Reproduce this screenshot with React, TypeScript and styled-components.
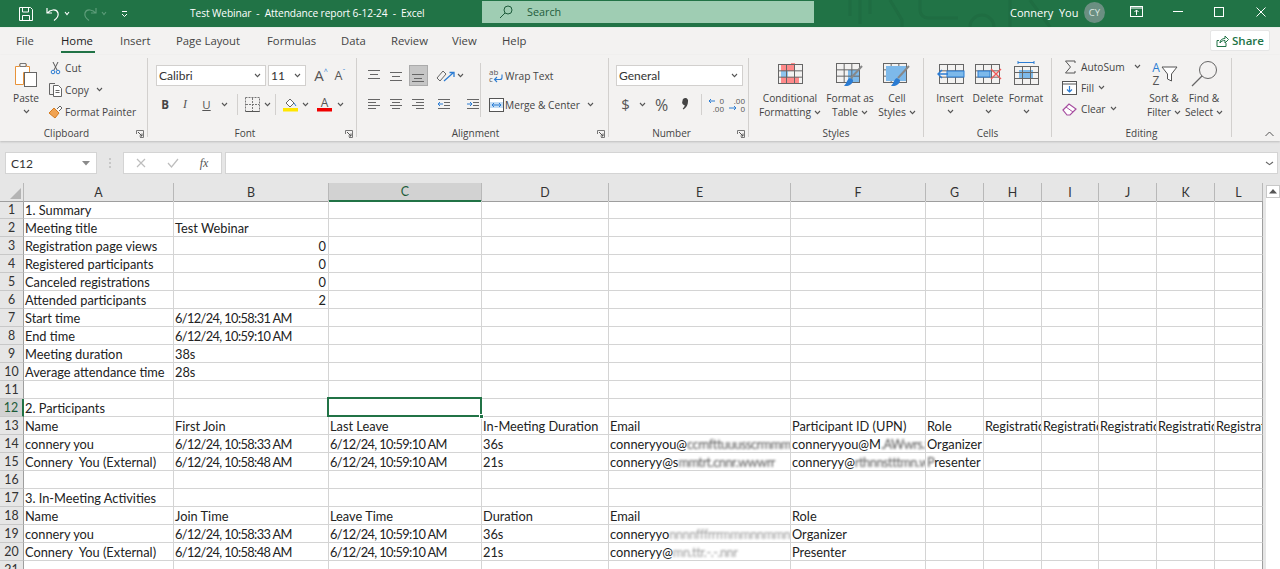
import React from "react";
import styled, { createGlobalStyle } from "styled-components";

const Global = createGlobalStyle`
  html, body { margin: 0; padding: 0; background: #fff; }
  #root { width: 1280px; height: 569px; overflow: hidden; }
`;
const UI = `"Open Sans", "Noto Sans", "Liberation Sans", sans-serif`;
const Cal = `Lato, "Open Sans", sans-serif`;

const Page = styled.div`
  width: 1280px; height: 569px; overflow: hidden;
  display: flex; flex-direction: column;
  font-family: ${UI}; background: #e6e6e6;
`;
const TitleBar = styled.header`
  position: relative; height: 27px; flex: none; background: #217346; color: #fff;
  display: flex; align-items: center; border-bottom: 1px solid #e8efe9; font-size: 10.5px;
`;
const Pattern = styled.svg`
  position: absolute; left: 840px; top: 0; width: 240px; height: 27px;
`;
const Slot = styled.span<{ $w: number; $start?: boolean }>`
  flex: none; width: ${p => p.$w}px; display: inline-flex; align-items: center;
  justify-content: ${p => (p.$start ? "flex-start" : "center")}; position: relative;
`;
const TitleText = styled.div`
  flex: none; width: 354px; padding-left: 62px; box-sizing: border-box; white-space: pre; position: relative; top: -1px; letter-spacing: -0.1px; font-size: 10.2px;
`;
const SearchBox = styled.div`
  flex: none; width: 332px; height: 22px; margin-top: -3px; background: #9fcdb3; color: #1f5c3c;
  display: flex; align-items: center; padding: 0 0 1px 17px; gap: 14px; box-sizing: border-box; font-size: 10.8px;
`;
const UserName = styled.div`
  flex: none; margin-left: 196px; width: 74px; white-space: pre; font-size: 11px; position: relative; top: -1px;
`;
const Avatar = styled.div`
  flex: none; width: 21px; height: 21px; border-radius: 50%; background: #6b8f82; color: #d9e6e0;
  font-size: 9.5px; display: flex; align-items: center; justify-content: center; margin-top: -3px;
`;
const WinBtns = styled.div`
  display: flex; align-items: center; margin-left: 10px; margin-top: -4px;
`;
const TabRow = styled.nav`
  flex: none; height: 27px; background: #f3f2f1; display: flex; align-items: flex-start; padding-left: 16px;
  font-size: 11.3px; color: #444; position: relative;
`;
const Tab = styled.div<{ $w: number; $active?: boolean }>`
  flex: none; width: ${p => p.$w}px; padding-top: 5px; line-height: 16px; position: relative;
  color: ${p => (p.$active ? "#222" : "#444")};
  ${p => p.$active ? `&::after{content:"";position:absolute;left:0;top:23px;width:34px;height:2px;background:#217346;}` : ""}
`;
const ShareBtn = styled.button`
  position: absolute; left: 1210px; top: 2px; width: 60px; height: 21px; padding: 0; box-sizing: border-box;
  background: #fff; border: 1px solid #e6e6e6; border-radius: 2px; color: #217346; font: 600 11.5px ${UI};
  display: flex; align-items: center; justify-content: center; gap: 3px;
`;
const Ribbon = styled.section`
  flex: none; height: 86px; background: #f3f2f1; display: flex; position: relative;
  box-shadow: 0 1px 2px rgba(0,0,0,.18); z-index: 1; font-size: 10px; color: #444;
`;
const Group = styled.div<{ $w: number }>`
  flex: none; width: ${p => p.$w}px; height: 86px; display: flex; flex-direction: column; position: relative;
`;
const GroupBody = styled.div<{ $pl?: number }>`
  flex: 1; min-height: 0; display: flex; padding-left: ${p => p.$pl ?? 0}px;
`;
const GroupLabel = styled.div<{ $launcher?: boolean }>`
  flex: none; height: 16px; line-height: 17px; text-align: center; color: #444; font-size: 10px;
  padding-right: ${p => (p.$launcher ? 14 : 0)}px;
`;
const Launcher = styled.svg`
  position: absolute; right: 3px; bottom: 3px; width: 8px; height: 8px;
`;
const Sep = styled.div`
  flex: none; width: 1px; height: 79px; margin-top: 3px; background: #d2d0ce;
`;
const InnerSep = styled.div`
  flex: none; width: 1px; height: 54px; margin-top: 8px; background: #d2d0ce;
`;
const Rows = styled.div<{ $w?: number }>`
  display: flex; flex-direction: column; padding-top: 10px; gap: 8px;
  ${p => (p.$w ? `width:${p.$w}px;flex:none;` : "")}
`;
const Row = styled.div`
  display: flex; align-items: center; height: 21px; position: relative;
`;
const VLine = styled.span`
  flex: none; width: 1px; height: 21px; background: #d2d0ce;
`;
const Combo = styled.div<{ $w: number; $ml?: number }>`
  flex: none; width: ${p => p.$w}px; height: 21px; margin-left: ${p => p.$ml ?? 0}px; box-sizing: border-box;
  background: #fff; border: 1px solid #d2d0ce; display: flex; align-items: center; justify-content: space-between;
  padding: 0 4px 0 2px; font-size: 10.2px; color: #333;
`;
const CalText = styled.span`
  font-family: ${Cal}; font-size: 12px;
`;
const ActiveBtn = styled.span`
  flex: none; width: 19px; height: 21px; box-sizing: border-box; background: #c6c6c6; border: 1px solid #ababab;
  display: inline-flex; align-items: center; justify-content: center;
`;
const BigBtn = styled.div<{ $w: number; $pl?: number }>`
  flex: none; width: ${p => p.$w}px; margin-left: ${p => p.$pl ?? 0}px; display: flex; flex-direction: column; align-items: center; padding-top: 4px;
  font-size: 10.2px; line-height: 14px; color: #444; white-space: nowrap;
`;
const BigIcon = styled.div`
  height: 29px; display: flex; align-items: center; justify-content: center; margin-bottom: 3px;
`;
const BigLine = styled.span`
  display: inline-flex; align-items: center; gap: 3px;
`;
const ChevLine = styled.div`
  margin-top: 4px;
`;
const SmallCol = styled.div<{ $pt: number; $w?: number; $gap?: number }>`
  display: flex; flex-direction: column; padding-top: ${p => p.$pt}px; gap: ${p => p.$gap ?? 0}px;
  ${p => (p.$w ? `width:${p.$w}px;flex:none;` : "")}
`;
const SmallRow = styled.div<{ $gap?: number }>`
  display: flex; align-items: center; height: 21px; gap: ${p => p.$gap ?? 4}px; white-space: nowrap; font-size: 10.2px;
`;
const Big = styled.span`
  font-size: 15px; color: #555; line-height: 15px;
`;
const Mid = styled.span`
  font-size: 12.5px; color: #555; line-height: 15px;
`;
const Caret = styled.span`
  font-size: 7px; color: #2b7cd3; margin-top: -7px; line-height: 8px;
`;
const Bold = styled.b`
  font-size: 11.5px; color: #444;
`;
const Ital = styled.i`
  font-size: 12px; color: #555; font-family: "Liberation Serif", serif;
`;
const Under = styled.u`
  font-size: 11.5px; color: #555;
`;
const Pct = styled.span`
  font-size: 16px; color: #555;
`;
const IconBox = styled.span<{ $w: number }>`
  flex: none; width: ${p => p.$w}px; display: inline-flex; justify-content: center; align-items: center;
`;
const Collapse = styled.svg`
  position: absolute; left: 1265px; top: 76px; width: 9px; height: 6px;
`;
const FormulaBar = styled.div`
  flex: none; height: 42px; background: #e6e6e6; display: flex; align-items: flex-start; padding-top: 11px; box-sizing: border-box;
`;
const NameBox = styled.div`
  flex: none; width: 92px; height: 22px; margin-left: 5px; box-sizing: border-box; background: #fff; border: 1px solid #d4d4d4;
  display: flex; align-items: center; justify-content: space-between; padding: 0 6px 0 5px; font-size: 10.2px; color: #333;
`;
const Dots = styled.div`
  flex: none; width: 26px; height: 22px; display: flex; align-items: center; justify-content: center;
`;
const FxBox = styled.div`
  flex: none; width: 99px; height: 22px; box-sizing: border-box; background: #fff; border: 1px solid #d4d4d4; display: flex; align-items: center;
`;
const FxMark = styled.i`
  font-family: "Liberation Serif", serif; font-size: 12px; color: #555;
`;
const Input = styled.div`
  flex: none; width: 1053px; height: 22px; margin-left: 3px; box-sizing: border-box; background: #fff; border: 1px solid #d4d4d4;
  display: flex; align-items: center; justify-content: flex-end; padding-right: 3px;
`;
const Work = styled.div`
  flex: 1; min-height: 0; display: flex; align-items: flex-start; overflow: hidden;
`;
const Sheet = styled.div`
  flex: none; display: grid; background: #fff;
  grid-template-columns: 24px 150px 155px 153px 127px 182px 135px 58px 58px 57px 58px 58px 48px;
  grid-auto-rows: 18px; font-family: ${Cal}; font-size: 12.8px; color: #222;
`;
const Corner = styled.div`
  height: 19px; background: #e6e6e6; border-right: 1px solid #b8b8b8; border-bottom: 1px solid #9e9e9e; box-sizing: border-box; position: relative;
  &::after { content: ""; position: absolute; right: 2px; bottom: 2px; border-style: solid; border-width: 0 0 11px 11px; border-color: transparent transparent #b4b4b4 transparent; }
`;
const ColHead = styled.div<{ $on?: boolean }>`
  height: 19px; box-sizing: border-box; background: ${p => (p.$on ? "#d2d2d2" : "#e6e6e6")};
  border-right: 1px solid #b8b8b8; border-bottom: ${p => (p.$on ? "2px solid #217346" : "1px solid #9e9e9e")};
  display: flex; align-items: center; justify-content: center; font-size: 12.4px; color: ${p => (p.$on ? "#1c5c38" : "#333")};
`;
const RowHead = styled.div<{ $on?: boolean }>`
  box-sizing: border-box; background: ${p => (p.$on ? "#d2d2d2" : "#e6e6e6")};
  border-right: ${p => (p.$on ? "2px solid #217346" : "1px solid #9e9e9e")}; border-bottom: 1px solid #c8c8c8;
  display: flex; align-items: center; justify-content: center; font-size: 12.4px; color: ${p => (p.$on ? "#1c5c38" : "#333")};
`;
const Cell = styled.div<{ $right?: boolean; $last?: boolean; $sel?: boolean; $date?: boolean }>`
  box-sizing: border-box; border-right: 1px solid ${p => (p.$last ? "#9e9e9e" : "#d4d4d4")}; border-bottom: 1px solid #d4d4d4;
  padding: 0 2px 0 1px; line-height: 19px; white-space: pre; position: relative;
  overflow: ${p => (p.$sel ? "visible" : "hidden")}; text-align: ${p => (p.$right ? "right" : "left")};
  letter-spacing: ${p => (p.$date ? "-0.62px" : "0")};
  ${p => p.$sel ? `
    &::before{content:"";position:absolute;left:-2px;top:-2px;right:-1px;bottom:-1px;border:2px solid #217346;z-index:2;}
    &::after{content:"";position:absolute;right:-3px;bottom:-3px;width:5px;height:5px;background:#217346;border:1px solid #fff;box-sizing:border-box;z-index:3;}
  ` : ""}
`;
const Smudge = styled.span<{ $soft?: boolean }>`
  display: inline-block; filter: blur(1px); color: #555; letter-spacing: -0.5px; vertical-align: top;
  opacity: ${p => (p.$soft ? 0.6 : 1)};
`;
const Scroll = styled.div`
  flex: none; width: 14px; height: 384px; margin-left: 3px; margin-top: 2px; background: #fff; display: flex; flex-direction: column;
`;
const ScrollBtn = styled.div`
  height: 13px; border: 1px solid #c8c8c8; box-sizing: border-box; display: flex; align-items: center; justify-content: center; background: #fff;
`;

/* ---------- icons ---------- */
const S = (w: number, h: number, children: React.ReactNode) => (
  <svg width={w} height={h} viewBox={`0 0 ${w} ${h}`} fill="none" style={{ display: "block", overflow: "visible" }}>{children}</svg>
);
const Chev = ({ c = "#555", w = 7 }: { c?: string; w?: number }) => S(w, 5, <path d={`M1 1l${(w - 2) / 2} 2.6L${w - 1} 1`} stroke={c} strokeWidth="1.1" />);
const Gridish = ({ w, h, x = 0, y = 0 }: { w: number; h: number; x?: number; y?: number }) => {
  const cw = w / 3, ch = h / 3;
  return (
    <g stroke="#666" strokeWidth="1">
      <rect x={x + .5} y={y + .5} width={w} height={h} />
      <path d={`M${x + .5 + cw} ${y}v${h}M${x + .5 + 2 * cw} ${y}v${h}M${x} ${y + .5 + ch}h${w}M${x} ${y + .5 + 2 * ch}h${w}`} />
    </g>
  );
};
const Lines = ({ kind }: { kind: "t" | "m" | "b" | "l" | "c" | "r" }) => {
  if (kind === "t" || kind === "m" || kind === "b") {
    const y = kind === "t" ? 1 : kind === "m" ? 3 : 5;
    return S(14, 14, <path d={`M1 ${y + .5}h12M3 ${y + 4.5}h8${kind === "b" ? "M1 " + (y + 7.5) + "h12" : "M1 " + (y + 8.5) + "h12"}`} stroke="#666" />);
  }
  return S(14, 13, kind === "l"
    ? <path d="M1 1.500h12M1 4.500h8M1 7.500h12M1 10.500h8" stroke="#666" />
    : kind === "c" ? <path d="M1 1.500h12M3 4.500h8M1 7.500h12M3 10.500h8" stroke="#666" />
      : <path d="M1 1.500h12M5 4.500h8M1 7.500h12M5 10.500h8" stroke="#666" />);
};
const Launch = () => (
  <Launcher viewBox="0 0 8 8" fill="none"><path d="M.5 4V.5H7.500V7.500H4" stroke="#777" /><path d="M2 2l4 4M6 3.500V6H3.500" stroke="#555" /></Launcher>
);
const IPaste = () => S(28, 28, <g>
  <path d="M3.500 6.500h4v-2h7v2h3v6h-6v12h-8z" fill="#fff" stroke="#e8933a" />
  <path d="M8 3.500h6v3H8z" fill="#f3f2f1" stroke="#777" />
  <rect x="12.500" y="12.500" width="12" height="14" fill="#fff" stroke="#666" />
</g>);
const ICut = () => S(11, 14, <g stroke="#555"><path d="M3 1l4 8M8 1L4 9" /><circle cx="3" cy="11" r="1.800" stroke="#2b7cd3" /><circle cx="8" cy="11" r="1.800" stroke="#2b7cd3" /></g>);
const ICopy = () => S(16, 15, <g stroke="#666"><path d="M5 12.500H1.500v-11H7" /><path d="M5.500 3.500h5l3 3v8h-8z" fill="#fff" /><path d="M7.500 8.500h4M7.500 10.500h4" /></g>);
const IPainter = () => S(15, 15, <g><path d="M1 9l5-5 5 5-4 5z" fill="#f0a352" stroke="#d47a1e" /><path d="M9 5l3-3 2 2-3 3" stroke="#666" fill="#fff" /></g>);
const IFill = () => S(15, 15, <g><path d="M3 6l4-4 4 4-4 4z" fill="#fff" stroke="#666" /><path d="M11 6l2 3" stroke="#2b7cd3" /><rect x="0" y="11" width="15" height="3.500" fill="#ffe600" /></g>);
const IFontA = () => S(15, 15, <g><text x="7.500" y="10" textAnchor="middle" fontSize="12" fontFamily="Open Sans" fill="#555">A</text><rect y="11" width="15" height="3.500" fill="#f00000" /></g>);
const IBorder = () => S(15, 15, <g stroke="#777"><path d="M.5.5h14v14H.5z" strokeDasharray="2 1" /><path d="M7.500 1v13M1 7.500h13" strokeDasharray="2 1" /><path d="M.5 14.500h14" strokeDasharray="none" stroke="#555" /></g>);
const IOrient = () => S(19, 14, <g stroke="#666"><path d="M1 9l6-7 3 3-6 7z" /><path d="M8 12l9-8M13.500 3.500H18V8" stroke="#2b7cd3" strokeWidth="1.300" /></g>);
const IWrap = () => S(15, 15, <g><text x="0" y="7" fontSize="8" fontFamily="Open Sans" fill="#555">ab</text><text x="0" y="14" fontSize="8" fontFamily="Open Sans" fill="#555">c</text><path d="M13 6.500v3a2 2 0 01-2 2H6M8 9l-2.500 2.500L8 14" stroke="#2b7cd3" strokeWidth="1.100" /></g>);
const IMerge = () => S(15, 14, <g><rect x=".5" y=".5" width="14" height="13" fill="#fff" stroke="#555" /><rect x="1" y="4" width="13" height="6" fill="#c5def5" /><path d="M3 7h9M3 7l2-2M3 7l2 2M12 7l-2-2M12 7l-2 2" stroke="#2b7cd3" /></g>);
const IIndent = ({ out }: { out?: boolean }) => S(14, 13, <g><path d="M1 1.500h12M7 4.500h6M7 7.500h6M1 10.500h12" stroke="#666" />{out ? <path d="M6 6H1M3 4L1 6l2 2" stroke="#2b7cd3" /> : <path d="M1 6h5M4 4l2 2-2 2" stroke="#2b7cd3" />}</g>);
const IComma = () => S(8, 14, <path d="M1.500 3a2.800 2.800 0 115.500.5c0 3-1.500 6-4.500 8l-.8-1c1.200-1 1.800-2 2-3.300A2.800 2.800 0 011.500 3z" fill="#444" />);
const IDec = ({ inc }: { inc?: boolean }) => S(16, 16, <g>
  <text x="16" y="7" textAnchor="end" fontSize="8" fontFamily="Open Sans" fill="#555">{inc ? ".00" : "0"}</text>
  <text x="16" y="15" textAnchor="end" fontSize="8" fontFamily="Open Sans" fill="#555">{inc ? "0" : ".00"}</text>
  {inc ? <path d="M0 11h7M5 9l2 2-2 2" stroke="#2b7cd3" /> : <path d="M7 4H1M3 2L1 4l2 2" stroke="#2b7cd3" />}
</g>);
const ICond = () => S(26, 26, <g>
  <rect x="4" y="4" width="10" height="6" fill="#ff8a8a" /><rect x="4" y="10" width="7" height="6" fill="#8ec4ee" /><rect x="4" y="16" width="18" height="6" fill="#ff8a8a" /><rect x="14" y="2" width="4" height="8" fill="#ff8a8a" />
  <Gridish w={24} h={19} x={1} y={3} />
</g>);
const ITable = () => S(30, 26, <g>
  <rect x="13" y="9" width="11" height="12" fill="#7db9ea" />
  <Gridish w={23} h={19} x={1} y={2} />
  <path d="M27 5L16 17" stroke="#888" strokeWidth="2" /><path d="M11 25c3 0 7-2 7-6l-3-2c-3 1-3 5-6 8z" fill="#2b7cd3" />
</g>);
const IStyles = () => S(30, 26, <g>
  <Gridish w={23} h={19} x={1} y={2} />
  <rect x="4" y="5" width="20" height="15" fill="#7db9ea" />
  <path d="M27 5L16 17" stroke="#888" strokeWidth="2" /><path d="M11 25c3 0 7-2 7-6l-3-2c-3 1-3 5-6 8z" fill="#2b7cd3" />
</g>);
const IInsert = () => S(29, 22, <g>
  <Gridish w={24} h={19} x={3} y={1} />
  <rect x="11" y="8" width="17" height="6" fill="#7db9ea" stroke="#2b7cd3" />
  <path d="M12 11H2M6 7l-4 4 4 4" stroke="#2b7cd3" strokeWidth="1.400" fill="none" />
</g>);
const IDelete = () => S(28, 22, <g>
  <Gridish w={24} h={19} x={1} y={1} />
  <rect x="4" y="8" width="12" height="6" fill="#7db9ea" stroke="#2b7cd3" />
  <path d="M17 6l10 10M27 6L17 16" stroke="#f05a5a" strokeWidth="1.400" />
</g>);
const IFormat = () => S(26, 25, <g>
  <path d="M5 1.500h16M5 0v3M21 0v3" stroke="#2b7cd3" />
  <rect x="6" y="9" width="14" height="9" fill="#7db9ea" />
  <Gridish w={24} h={18} x={1} y={5} />
</g>);
const ISigma = () => S(12, 14, <path d="M11 3V1H1.500L6.500 7 1.500 13H11v-2" stroke="#555" fill="none" />);
const IFillDown = () => S(15, 14, <g><rect x=".5" y=".5" width="14" height="13" fill="#fff" stroke="#555" /><path d="M1 3h13" stroke="#555" /><path d="M7.500 5v6M5 8.500l2.500 2.500L10 8.500" stroke="#2b7cd3" strokeWidth="1.200" /></g>);
const IClear = () => S(15, 14, <g><path d="M1 8l6-6 7 5-6 6H5z" stroke="#a64d9f" strokeWidth="1.200" fill="#fff" /><path d="M4 5l7 5" stroke="#a64d9f" /></g>);
const ISort = () => S(28, 25, <g>
  <text x="6" y="11" textAnchor="middle" fontSize="12" fontFamily="Open Sans" fill="#2b7cd3">A</text>
  <text x="6" y="24" textAnchor="middle" fontSize="12" fontFamily="Open Sans" fill="#555">Z</text>
  <path d="M12 6h15l-5.500 7v7l-4-2v-5z" stroke="#555" fill="#fff" />
</g>);
const IFind = () => S(28, 28, <g stroke="#666"><circle cx="18" cy="10" r="8.500" fill="none" /><path d="M12 16L2 26" strokeWidth="1.200" /></g>);
const IXmark = () => S(10, 10, <path d="M1 1l8 8M9 1l-8 8" stroke="#bdbdbd" strokeWidth="1.200" />);
const ICheck = () => S(12, 10, <path d="M1 5l3.500 4L11 1" stroke="#bdbdbd" strokeWidth="1.200" />);

const tabs: [string, number][] = [["File", 45], ["Home", 59], ["Insert", 56], ["Page Layout", 91], ["Formulas", 74], ["Data", 50], ["Review", 61], ["View", 50], ["Help", 40]];

type CellDef = React.ReactNode;
const blank: CellDef[] = [];
const sheetRows: Record<number, CellDef[]> = {
  1: ["1. Summary"],
  2: ["Meeting title", "Test Webinar"],
  3: ["Registration page views", "0"],
  4: ["Registered participants", "0"],
  5: ["Canceled registrations", "0"],
  6: ["Attended participants", "2"],
  7: ["Start time", "6/12/24, 10:58:31 AM"],
  8: ["End time", "6/12/24, 10:59:10 AM"],
  9: ["Meeting duration", "38s"],
  10: ["Average attendance time", "28s"],
  12: ["2. Participants"],
  13: ["Name", "First Join", "Last Leave", "In-Meeting Duration", "Email", "Participant ID (UPN)", "Role", "Registration Time", "Registration Time", "Registration Time", "Registration Time", "Registration Time"],
  14: ["connery you", "6/12/24, 10:58:33 AM", "6/12/24, 10:59:10 AM", "36s",
    <>conneryyou@<Smudge>ccrnfttuuusscrmmmwwrrn</Smudge></>,
    <>conneryyou@M<Smudge>.AWwrs.tte.i</Smudge></>, "Organizer"],
  15: ["Connery  You (External)", "6/12/24, 10:58:48 AM", "6/12/24, 10:59:10 AM", "21s",
    <>conneryy@s<Smudge>mmtrt.cnnr.wwwrr</Smudge></>,
    <>conneryy@<Smudge>rthnnstttmn.wn</Smudge></>, <><Smudge>P</Smudge>resenter</>],
  17: ["3. In-Meeting Activities"],
  18: ["Name", "Join Time", "Leave Time", "Duration", "Email", "Role"],
  19: ["connery you", "6/12/24, 10:58:33 AM", "6/12/24, 10:59:10 AM", "36s",
    <>conneryyo<Smudge $soft>nnnnfffrrrmmmnnmmnnrm.ss.rr</Smudge></>, "Organizer"],
  20: ["Connery  You (External)", "6/12/24, 10:58:48 AM", "6/12/24, 10:59:10 AM", "21s",
    <>conneryy@<Smudge $soft>mn.ttr.-.-.nnr</Smudge></>, "Presenter"],
};
const cols = ["A", "B", "C", "D", "E", "F", "G", "H", "I", "J", "K", "L"];

export default function App() {
  const grid: React.ReactNode[] = [];
  for (let r = 1; r <= 21; r++) {
    grid.push(<RowHead key={`h${r}`} $on={r === 12}>{r}</RowHead>);
    const vals = sheetRows[r] ?? blank;
    cols.forEach((_, c) => {
      const right = c === 1 && r >= 3 && r <= 6;
      const sel = r === 12 && c === 2;
      const v = vals[c];
      const date = typeof v === "string" && /^\d+\/\d+\/\d+/.test(v);
      grid.push(<Cell key={`${r}-${c}`} $right={right} $last={c === 11} $sel={sel} $date={date}>{v ?? ""}</Cell>);
    });
  }
  return (
    <Page>
      <Global />
      <TitleBar>
        <Pattern viewBox="0 0 240 27" fill="none" stroke="#1f6d42" strokeWidth="3">
          <path d="M10 0v16M20 0v24M30 0v14M50 0l12 20v7M80 0v10a8 8 0 008 8h30M130 27a12 12 0 0124 0M170 0v27M190 0l20 27" />
        </Pattern>
        <Slot $w={17} />
        <Slot $w={17}>{S(16, 16, <g stroke="#fff"><path d="M1.500 1.500h11l2 2v11h-13z" /><path d="M4.500 2v4h6V2M4.500 14.500v-5h7v5" /></g>)}</Slot>
        <Slot $w={12} />
        <Slot $w={14}>{S(14, 14, <path d="M1 1v5h5M1.500 6c2-3 9-5 10.500 0 1 4-2 6-4 7.500" stroke="#fff" strokeWidth="1.200" />)}</Slot>
        <Slot $w={13}><Chev c="#fff" w={6} /></Slot>
        <Slot $w={9} />
        <Slot $w={16}>{S(14, 14, <path d="M13 1v5H8M12.500 6c-2-3-9-5-10.500 0-1 4 2 6 4 7.500" stroke="#5d9c79" strokeWidth="1.200" />)}</Slot>
        <Slot $w={11}><Chev c="#5d9c79" w={6} /></Slot>
        <Slot $w={12} />
        <Slot $w={7}>{S(7, 8, <path d="M1 1.500h5M1 4l2.500 2.500L6 4" stroke="#fff" />)}</Slot>
        <TitleText>Test Webinar  -  Attendance report 6-12-24  -  Excel</TitleText>
        <SearchBox>
          {S(14, 14, <g stroke="#1f5c3c"><circle cx="9" cy="5" r="4" /><path d="M6 8l-5 5" /></g>)}
          <span>Search</span>
        </SearchBox>
        <UserName>Connery  You</UserName>
        <Avatar>CY</Avatar>
        <WinBtns>
          <Slot $w={42}>{S(13, 11, <g stroke="#fff"><rect x=".5" y=".5" width="12" height="10" /><path d="M1 2h11" /><path d="M6.500 9V4M4.500 6l2-2 2 2" /></g>)}</Slot>
          <Slot $w={41}>{S(10, 1, <path d="M0 .5h10" stroke="#fff" />)}</Slot>
          <Slot $w={41}>{S(10, 10, <rect x=".5" y=".5" width="9" height="9" stroke="#fff" />)}</Slot>
          <Slot $w={43}>{S(10, 10, <path d="M.5.5l9 9M9.500.5l-9 9" stroke="#fff" />)}</Slot>
        </WinBtns>
      </TitleBar>

      <TabRow>
        {tabs.map(([t, w]) => <Tab key={t} $w={w} $active={t === "Home"}>{t}</Tab>)}
        <ShareBtn>
          {S(13, 12, <g stroke="#217346"><path d="M3 5.500H1v6h9V8" /><path d="M4 8c0-3 2-4.500 5-4.500V1l3.500 3.500L9 8V5.500c-2 0-4 .5-5 2.500z" /></g>)}
          Share
        </ShareBtn>
      </TabRow>

      <Ribbon>
        <Group $w={147}>
          <GroupBody>
            <BigBtn $w={48} $pl={2}><BigIcon><IPaste /></BigIcon>Paste<ChevLine><Chev /></ChevLine></BigBtn>
            <SmallCol $pt={2} $gap={1}>
              <SmallRow><IconBox $w={11}><ICut /></IconBox>Cut</SmallRow>
              <SmallRow><IconBox $w={11}><ICopy /></IconBox>Copy<Slot $w={13}><Chev /></Slot></SmallRow>
              <SmallRow><IconBox $w={11}><IPainter /></IconBox>Format Painter</SmallRow>
            </SmallCol>
          </GroupBody>
          <GroupLabel $launcher>Clipboard</GroupLabel>
          <Launch />
        </Group>
        <Sep />
        <Group $w={208}>
          <GroupBody $pl={8}>
            <Rows>
              <Row>
                <Combo $w={110}><CalText>Calibri</CalText><Chev /></Combo>
                <Combo $w={38} $ml={2}><CalText>11</CalText><Chev /></Combo>
                <Slot $w={5} />
                <Slot $w={20}><Big>A</Big><Caret>^</Caret></Slot>
                <Slot $w={18}><Mid>A</Mid><Caret>ˇ</Caret></Slot>
              </Row>
              <Row>
                <Slot $w={18}><Bold>B</Bold></Slot>
                <Slot $w={22}><Ital>I</Ital></Slot>
                <Slot $w={21}><Under>U</Under></Slot>
                <Slot $w={14}><Chev /></Slot>
                <Slot $w={6} />
                <VLine />
                <Slot $w={7} />
                <Slot $w={14}><IBorder /></Slot>
                <Slot $w={16}><Chev /></Slot>
                <VLine />
                <Slot $w={7} />
                <Slot $w={14}><IFill /></Slot>
                <Slot $w={16}><Chev /></Slot>
                <Slot $w={4} />
                <Slot $w={15}><IFontA /></Slot>
                <Slot $w={16}><Chev /></Slot>
              </Row>
            </Rows>
          </GroupBody>
          <GroupLabel $launcher>Font</GroupLabel>
          <Launch />
        </Group>
        <Sep />
        <Group $w={251}>
          <GroupBody $pl={6}>
            <Rows $w={117}>
              <Row>
                <Slot $w={22}><Lines kind="t" /></Slot>
                <Slot $w={22}><Lines kind="m" /></Slot>
                <Slot $w={22}><ActiveBtn><Lines kind="b" /></ActiveBtn></Slot>
                <Slot $w={6} />
                <Slot $w={20}><IOrient /></Slot>
                <Slot $w={10}><Chev /></Slot>
              </Row>
              <Row>
                <Slot $w={22}><Lines kind="l" /></Slot>
                <Slot $w={22}><Lines kind="c" /></Slot>
                <Slot $w={22}><Lines kind="r" /></Slot>
                <Slot $w={4} />
                <Slot $w={22}><IIndent out /></Slot>
                <Slot $w={11} />
                <Slot $w={14}><IIndent /></Slot>
              </Row>
            </Rows>
            <InnerSep />
            <Rows>
              <Row><Slot $w={8} /><SmallRow $gap={1}><IWrap /><span>Wrap Text</span></SmallRow></Row>
              <Row><Slot $w={8} /><SmallRow $gap={1}><IMerge /><span>Merge &amp; Center</span><Slot $w={20}><Chev /></Slot></SmallRow></Row>
            </Rows>
          </GroupBody>
          <GroupLabel $launcher>Alignment</GroupLabel>
          <Launch />
        </Group>
        <Sep />
        <Group $w={139}>
          <GroupBody $pl={7}>
            <Rows>
              <Row><Combo $w={127}><CalText>General</CalText><Chev /></Combo></Row>
              <Row>
                <Slot $w={19}><Big>$</Big></Slot>
                <Slot $w={14}><Chev /></Slot>
                <Slot $w={25}><Pct>%</Pct></Slot>
                <Slot $w={22}><IComma /></Slot>
                <Slot $w={5} />
                <VLine />
                <Slot $w={6} />
                <Slot $w={16}><IDec /></Slot>
                <Slot $w={5} />
                <Slot $w={16}><IDec inc /></Slot>
              </Row>
            </Rows>
          </GroupBody>
          <GroupLabel $launcher>Number</GroupLabel>
          <Launch />
        </Group>
        <Sep />
        <Group $w={174}>
          <GroupBody $pl={10}>
            <BigBtn $w={62}><BigIcon><ICond /></BigIcon>Conditional<BigLine>Formatting <Chev /></BigLine></BigBtn>
            <BigBtn $w={58}><BigIcon><ITable /></BigIcon>Format as<BigLine>Table <Chev /></BigLine></BigBtn>
            <BigBtn $w={36}><BigIcon><IStyles /></BigIcon>Cell<BigLine>Styles <Chev /></BigLine></BigBtn>
          </GroupBody>
          <GroupLabel>Styles</GroupLabel>
        </Group>
        <Sep />
        <Group $w={127}>
          <GroupBody $pl={7}>
            <BigBtn $w={38}><BigIcon><IInsert /></BigIcon>Insert<ChevLine><Chev /></ChevLine></BigBtn>
            <BigBtn $w={38}><BigIcon><IDelete /></BigIcon>Delete<ChevLine><Chev /></ChevLine></BigBtn>
            <BigBtn $w={38}><BigIcon><IFormat /></BigIcon>Format<ChevLine><Chev /></ChevLine></BigBtn>
          </GroupBody>
          <GroupLabel>Cells</GroupLabel>
        </Group>
        <Sep />
        <Group $w={179}>
          <GroupBody $pl={10}>
            <SmallCol $pt={1} $w={82}>
              <SmallRow><IconBox $w={15}><ISigma /></IconBox>AutoSum<Slot $w={17}><Chev /></Slot></SmallRow>
              <SmallRow><IconBox $w={15}><IFillDown /></IconBox>Fill<Chev /></SmallRow>
              <SmallRow><IconBox $w={15}><IClear /></IconBox>Clear<Chev /></SmallRow>
            </SmallCol>
            <BigBtn $w={40}><BigIcon><ISort /></BigIcon>Sort &amp;<BigLine>Filter <Chev /></BigLine></BigBtn>
            <BigBtn $w={40}><BigIcon><IFind /></BigIcon>Find &amp;<BigLine>Select <Chev /></BigLine></BigBtn>
          </GroupBody>
          <GroupLabel>Editing</GroupLabel>
        </Group>
        <Sep />
        <Collapse viewBox="0 0 9 6" fill="none"><path d="M.5 5L4.500 1l4 4" stroke="#555" /></Collapse>
      </Ribbon>

      <FormulaBar>
        <NameBox><CalText>C12</CalText>{S(8, 5, <path d="M0 0h8L4 4.500z" fill="#8a8a8a" />)}</NameBox>
        <Dots>{S(2, 10, <path d="M1 0v2M1 4v2M1 8v2" stroke="#a8a8a8" />)}</Dots>
        <FxBox>
          <Slot $w={33}><IXmark /></Slot>
          <Slot $w={32}><ICheck /></Slot>
          <Slot $w={30}><FxMark>fx</FxMark></Slot>
        </FxBox>
        <Input><Chev c="#666" w={9} /></Input>
      </FormulaBar>

      <Work>
        <Sheet>
          <Corner />
          {cols.map(c => <ColHead key={c} $on={c === "C"}>{c}</ColHead>)}
          {grid}
        </Sheet>
        <Scroll>
          <ScrollBtn>{S(8, 5, <path d="M4 0l4 4.500H0z" fill="#555" />)}</ScrollBtn>
        </Scroll>
      </Work>
    </Page>
  );
}
